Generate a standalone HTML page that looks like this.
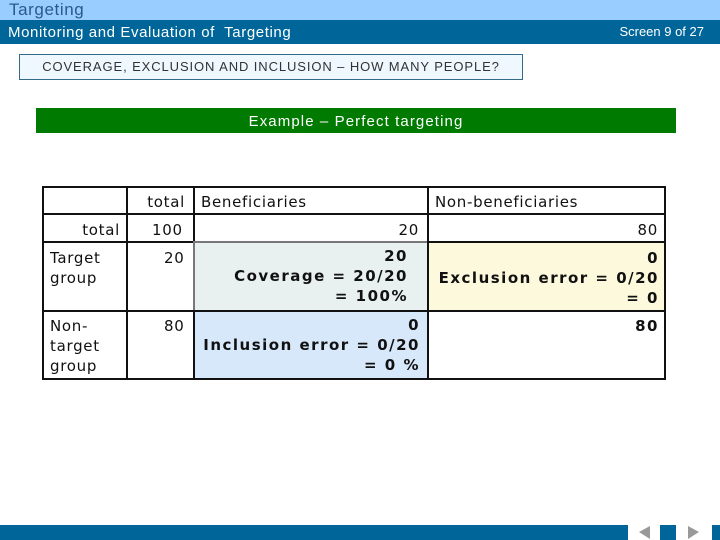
<!DOCTYPE html>
<html><head><style>
*{margin:0;padding:0;box-sizing:border-box}
body{width:720px;height:540px;position:relative;background:#fff;font-family:"DejaVu Sans",Verdana,sans-serif;overflow:hidden}
.a{position:absolute}
.c{position:absolute;border:2px solid #111;font-size:15px;line-height:20px;color:#111;letter-spacing:0.7px;white-space:nowrap}
.b{font-weight:bold;text-align:right;letter-spacing:1.5px}
</style></head><body>
<div class="a" style="left:0;top:0;width:720px;height:20px;background:#99ccff"></div>
<div class="a" style="left:9px;top:0;font-family:'Liberation Sans',sans-serif;font-size:17px;letter-spacing:0.6px;color:#2a5a8a;line-height:20px">Targeting</div>
<div class="a" style="left:0;top:20px;width:720px;height:24px;background:#006699"></div>
<div class="a" style="left:8px;top:23px;font-family:'Liberation Sans',sans-serif;font-size:15px;letter-spacing:0.6px;color:#fff;line-height:20px;white-space:nowrap">Monitoring and Evaluation of&nbsp; Targeting</div>
<div class="a" style="right:16px;top:22px;font-family:'Liberation Sans',sans-serif;font-size:13px;color:#fff;line-height:20px">Screen 9 of 27</div>
<div class="a" style="left:19px;top:54px;width:504px;height:26px;background:#f0f8ff;border:1px solid #336b8a;font-family:'Liberation Sans',sans-serif;font-size:13px;letter-spacing:0.9px;color:#333;text-align:center;line-height:24px;white-space:nowrap">COVERAGE, EXCLUSION AND INCLUSION – HOW MANY PEOPLE?</div>
<div class="a" style="left:36px;top:108px;width:640px;height:25px;background:#007a00;color:#fff;font-family:'Liberation Sans',sans-serif;font-size:15px;letter-spacing:1.1px;text-align:center;line-height:27px">Example – Perfect targeting</div>

<div class="c" style="left:42px;top:186px;width:86px;height:29px"></div>
<div class="c" style="left:126px;top:186px;width:69px;height:29px;text-align:right;padding:4px 8px 0 0">total</div>
<div class="c" style="left:193px;top:186px;width:236px;height:29px;padding:4px 0 0 6px">Beneficiaries</div>
<div class="c" style="left:427px;top:186px;width:239px;height:29px;padding:4px 0 0 6px">Non-beneficiaries</div>

<div class="c" style="left:42px;top:213px;width:86px;height:30px;text-align:right;padding:5px 6px 0 0">total</div>
<div class="c" style="left:126px;top:213px;width:69px;height:30px;padding:5px 0 0 24px">100</div>
<div class="c" style="left:193px;top:213px;width:236px;height:30px;text-align:right;padding:5px 8px 0 0">20</div>
<div class="c" style="left:427px;top:213px;width:239px;height:30px;text-align:right;padding:5px 6px 0 0">80</div>

<div class="c" style="left:42px;top:241px;width:86px;height:71px;padding:5px 0 0 6px">Target<br>group</div>
<div class="c" style="left:126px;top:241px;width:69px;height:71px;padding:5px 0 0 36px">20</div>
<div class="c b" style="left:193px;top:241px;width:236px;height:71px;background:#e8f1ef;border-color:#777;padding:3px 19px 0 0">20<br>Coverage = 20/20<br>= 100%</div>
<div class="c b" style="left:427px;top:241px;width:239px;height:71px;background:#fdf9dc;border-color:#111;padding:5px 5px 0 0">0<br>Exclusion error = 0/20<br>= 0</div>

<div class="c" style="left:42px;top:310px;width:86px;height:70px;padding:4px 0 0 6px">Non-<br>target<br>group</div>
<div class="c" style="left:126px;top:310px;width:69px;height:70px;padding:4px 0 0 36px">80</div>
<div class="c b" style="left:193px;top:310px;width:236px;height:70px;background:#d8e8fb;padding:3px 7px 0 0">0<br>Inclusion error = 0/20<br>= 0 %</div>
<div class="c b" style="left:427px;top:310px;width:239px;height:70px;padding:4px 5px 0 0">80</div>

<div class="a" style="left:0;top:525px;width:720px;height:15px;background:#006699"></div>
<div class="a" style="left:628px;top:525px;width:32px;height:15px;background:#fff"></div>
<div class="a" style="left:676px;top:525px;width:36px;height:15px;background:#fff"></div>
<svg class="a" style="left:628px;top:525px" width="84" height="15"><polygon points="11,7 22,1 22,14" fill="#999"/><polygon points="60,1 71,7 60,14" fill="#999"/></svg>
</body></html>
